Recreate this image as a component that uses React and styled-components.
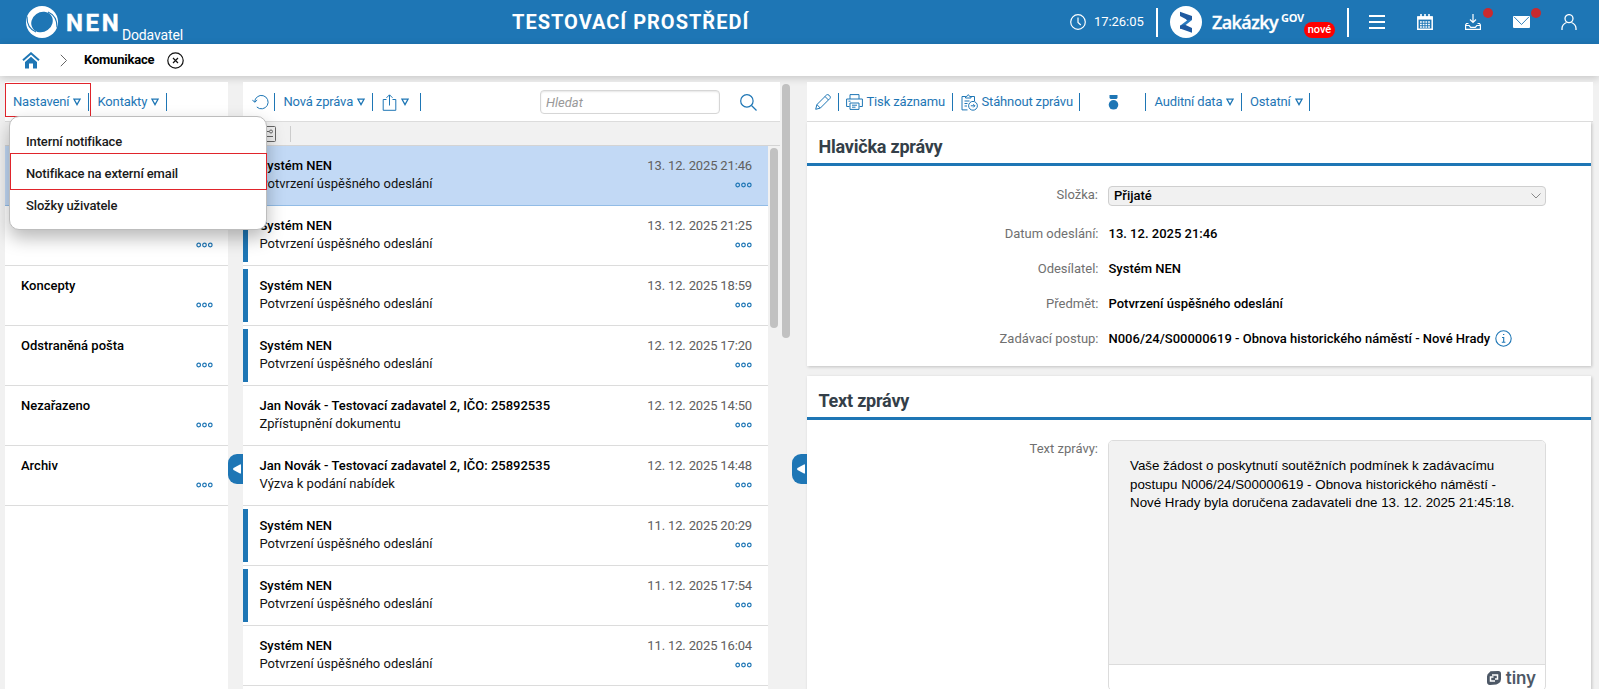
import React from "react";
import styled, { createGlobalStyle, css } from "styled-components";

const BLUE = "#1e76b5";
const LINE = "#dcdcdc";

const Global = createGlobalStyle`
  * { box-sizing: border-box; }
  html, body { margin: 0; height: 100%; overflow: hidden; }
  #root { height: 100%; }
  body {
    background: #f1f1f1;
    color: #111;
    font: 13px/18px Roboto, "Liberation Sans", sans-serif;
  }
`;

const Page = styled.div`
  height: 689px;
  overflow: hidden;
  display: flex;
  flex-direction: column;
`;

/* Header */
const Header = styled.header`
  flex: none;
  height: 44px;
  background: ${BLUE};
  color: #fff;
  display: flex;
  align-items: center;
  justify-content: space-between;
  padding: 0 22px 0 26px;
`;
const Brand = styled.div`
  display: flex;
  align-items: center;
  width: 486px;
  height: 44px;
`;
const BrandName = styled.div`
  width: 56px;
  margin-left: 8px;
  padding-top: 2px;
  font-size: 24px;
  line-height: 28px;
  font-weight: 700;
  letter-spacing: 2.6px;
  -webkit-text-stroke: 0.4px #fff;
  white-space: nowrap;
`;
const Role = styled.div`
  align-self: flex-end;
  font-size: 14px;
  line-height: 18px;
  letter-spacing: -0.15px;
`;
const Environment = styled.div`
  font-size: 20px;
  font-weight: 700;
  letter-spacing: 1px;
  white-space: nowrap;
  flex: 1;
`;
const HeaderTools = styled.div`
  display: flex;
  align-items: center;
  height: 44px;
`;
const Clock = styled.div`
  display: flex;
  align-items: center;
  gap: 8px;
  width: 86px;
  white-space: nowrap;
  letter-spacing: -0.05px;
`;
const HeaderRule = styled.div`
  width: 2px;
  height: 29px;
  background: #fff;
`;
const Portal = styled.div`
  display: flex;
  align-items: center;
  width: 189px;
  padding-left: 12px;
`;
const PortalName = styled.span`
  width: 69px;
  margin-left: 10px;
  font: 600 18px/24px "Open Sans", sans-serif;
  letter-spacing: -0.6px;
  -webkit-text-stroke: 0.3px #fff;
  white-space: nowrap;
`;
const PortalSup = styled.span`
  width: 23px;
  margin-top: -8px;
  font: 700 11px/12px "Open Sans", sans-serif;
  letter-spacing: -0.3px;
`;
const NewPill = styled.span`
  width: 31px;
  height: 16px;
  margin-top: 16px;
  border-radius: 8px;
  background: #f00;
  font-size: 11px;
  line-height: 16px;
  font-weight: 500;
  text-align: center;
`;
const IconRow = styled.div`
  display: flex;
  align-items: center;
  gap: 32px;
  padding-left: 20px;
`;
const IconSlot = styled.div`
  position: relative;
  width: 16px;
  height: 16px;
  svg { display: block; }
`;
const AlertDot = styled.span`
  position: absolute;
  left: 18px;
  top: -6px;
  width: 10px;
  height: 10px;
  border-radius: 50%;
  background: #c92a2f;
`;

/* Breadcrumb */
const Breadcrumb = styled.nav`
  flex: none;
  position: relative;
  height: 32px;
  background: #fff;
  box-shadow: 0 2px 8px rgba(0, 0, 0, 0.18);
  display: flex;
  align-items: center;
  padding-left: 22px;
`;
const CrumbSep = styled.div`
  width: 44px;
  padding-left: 20px;
  svg { display: block; }
`;
const Crumb = styled.div`
  width: 83px;
  font-weight: 700;
  letter-spacing: -0.2px;
  color: #000;
`;

/* Columns */
const Workspace = styled.main`
  flex: 1;
  min-height: 0;
  display: flex;
  padding: 6px 6px 0 5px;
`;
const Folders = styled.section`
  width: 223px;
  background: #fff;
  display: flex;
  flex-direction: column;
`;
const Messages = styled.section`
  width: 537px;
  display: flex;
  flex-direction: column;
`;
const Detail = styled.section`
  width: 786px;
  display: flex;
  flex-direction: column;
`;
const Toolbar = styled.div`
  flex: none;
  position: relative;
  height: 40px;
  background: #fff;
  border-bottom: 1px solid ${LINE};
  display: flex;
  align-items: center;
  padding-top: 1px;
`;
const ToolButton = styled.div`
  width: ${(p) => p.$w}px;
  height: 18px;
  padding-left: ${(p) => p.$pad ?? 8}px;
  border-right: 1px solid ${BLUE};
  color: ${BLUE};
  display: flex;
  align-items: center;
  gap: 4px;
  white-space: nowrap;
  letter-spacing: -0.15px;
  svg { flex: none; }
`;
const Highlight = styled.div`
  position: absolute;
  border: 1px solid #e0242b;
  left: ${(p) => p.$x}px;
  top: ${(p) => p.$y}px;
  width: ${(p) => p.$w}px;
  height: ${(p) => p.$h}px;
  pointer-events: none;
`;
const Menu = styled.div`
  position: absolute;
  z-index: 5;
  left: 4px;
  top: 34px;
  width: 258px;
  height: 114px;
  padding: 9px 0;
  background: #fff;
  border: 1px solid #bdbdbd;
  border-radius: 10px;
  box-shadow: 0 8px 18px rgba(0, 0, 0, 0.28);
`;
const MenuItem = styled.div`
  height: 32px;
  padding-left: 16px;
  line-height: 32px;
  font-weight: 500;
  letter-spacing: -0.13px;
  color: #1a1a1a;
`;
const FilterBar = styled.div`
  flex: none;
  height: 24px;
  background: #f1f1f1;
  border-bottom: 1px solid #d4d4d4;
  display: flex;
  align-items: center;
  gap: 14px;
  padding-left: 17px;
`;
const FilterRule = styled.div`
  width: 1px;
  height: 16px;
  background: #ccc;
`;
const rowBase = css`
  flex: none;
  height: 60px;
  border-bottom: 1px solid ${(p) => (p.$selected ? "#92bce6" : LINE)};
  background: ${(p) => (p.$selected ? "#c2d9f5" : "#fff")};
  display: flex;
  flex-direction: column;
`;
const FolderRow = styled.div`
  ${rowBase}
  padding: 11px 15px 0 16px;
`;
const MessageRow = styled.div`
  ${rowBase}
  padding: 11px 16px 0 16.5px;
  background-image: ${(p) => (p.$unread ? `linear-gradient(${BLUE}, ${BLUE})` : "none")};
  background-size: 5px 53px;
  background-position: 0 3px;
  background-repeat: no-repeat;
`;
const RowLine = styled.div`
  height: 18px;
  display: flex;
  justify-content: space-between;
  align-items: center;
  white-space: nowrap;
  svg { margin-top: 2px; }
`;
const Sender = styled.span`
  font-weight: 500;
  color: #000;
`;
const Subject = styled.span`
  color: #111;
`;
const Stamp = styled.span`
  color: #606060;
  letter-spacing: -0.15px;
`;
const List = styled.div`
  width: 525px;
  overflow: hidden;
`;
const ListArea = styled.div`
  flex: 1;
  min-height: 0;
  display: flex;
  gap: 2px;
`;
const Thumb = styled.div`
  flex: none;
  width: 8px;
  height: ${(p) => p.$h}px;
  margin-top: 2px;
  border-radius: 4px;
  background: #c1c1c1;
`;
const Splitter = styled.div`
  width: 15px;
  padding-top: 372px;
  z-index: 1;
`;
const Handle = styled.div`
  width: 15px;
  height: 30px;
  padding-left: 2px;
  border-radius: 9px 0 0 9px;
  background: ${BLUE};
  display: flex;
  align-items: center;
  justify-content: center;
`;
const OuterScroll = styled.div`
  width: 12px;
  padding-left: 2px;
`;
const SearchBox = styled.input`
  width: 180px;
  height: 24px;
  margin: 0 19.5px 0 119px;
  padding: 0 5px;
  border: 1px solid #d6d6d6;
  border-radius: 4px;
  box-shadow: inset 0 1px 2px rgba(0, 0, 0, 0.1);
  background: #fff;
  font: italic 13px Roboto, sans-serif;
  outline: 0;
  &::placeholder { color: #999; }
`;

/* Detail */
const Card = styled.div`
  flex: none;
  width: 784px;
  height: ${(p) => p.$h}px;
  margin-bottom: 10px;
  background: #fff;
  box-shadow: 1px 1px 3px rgba(0, 0, 0, 0.2);
`;
const CardTitle = styled.h2`
  height: 44px;
  margin: 0;
  padding: 6px 0 0 11.5px;
  border-bottom: 3px solid ${BLUE};
  font-size: 18px;
  line-height: 38px;
  font-weight: 700;
  letter-spacing: -0.22px;
  color: #343f49;
`;
const Field = styled.div`
  display: flex;
  height: ${(p) => p.$h ?? 35}px;
  line-height: 18px;
`;
const Label = styled.div`
  width: ${(p) => p.$w ?? 291.5}px;
  margin-right: 10px;
  text-align: right;
  color: #707070;
`;
const Value = styled.div`
  display: flex;
  align-items: flex-start;
  gap: 4.5px;
  font-weight: 500;
  color: #000;
  white-space: nowrap;
`;
const Select = styled.div`
  width: 438px;
  height: 20px;
  padding: 0 4px 0 5px;
  border: 1px solid #cfcfcf;
  border-radius: 4px;
  background: #f1f1f1;
  display: flex;
  align-items: center;
  justify-content: space-between;
  font-weight: 500;
  color: #000;
`;
const HeaderFields = styled.div`
  padding-top: 20px;
`;
const Editor = styled.div`
  width: 438px;
  height: 251px;
  border: 1px solid #dcdcdc;
  border-radius: 5px;
  overflow: hidden;
  background: #fff;
`;
const EditorBody = styled.div`
  height: 224px;
  padding: 16px 21px;
  background: #f2f2f2;
  border-bottom: 1px solid #dcdcdc;
  font: 13.333px/18.6px "Liberation Sans", Arial, sans-serif;
  color: #000;
  white-space: nowrap;
`;
const EditorFoot = styled.div`
  display: flex;
  align-items: center;
  justify-content: flex-end;
  gap: 4px;
  height: 25px;
  padding-right: 9px;
  color: #4d5866;
  font: 600 17px/20px Inter, sans-serif;
  letter-spacing: -0.1px;
`;

const Ico = ({ w = 16, h = 16, vb, children, sw = 1, fill = "none" }) => (
  <svg width={w} height={h} viewBox={vb || `0 0 ${w} ${h}`} fill={fill} stroke={fill === "none" ? "currentColor" : "none"} strokeWidth={sw}>
    {children}
  </svg>
);
const Caret = () => (
  <Ico w={8} h={8} sw={1.3}><path d="M1 1.2h6L4 6.6z" /></Ico>
);
const Dots = () => (
  <svg width="17" height="6" viewBox="0 0 17 6" fill="none" stroke={BLUE} strokeWidth="1.2">
    <circle cx="2.7" cy="3" r="1.8" /><circle cx="8.5" cy="3" r="1.8" /><circle cx="14.3" cy="3" r="1.8" />
  </svg>
);
const CollapseHandle = () => (
  <Handle><Ico w={10} h={12} fill="#fff"><path d="M8 1.500Q9 1 9 2.400v7.200Q9 11 8 10.500L1.500 7Q.5 6 1.500 5z" /></Ico></Handle>
);

const folders = ["", "", "Koncepty", "Odstraněná pošta", "Nezařazeno", "Archiv"];
const SYS = "Systém NEN";
const SENT = "Potvrzení úspěšného odeslání";
const JAN = "Jan Novák - Testovací zadavatel 2, IČO: 25892535";
const messages = [
  [SYS, SENT, "13. 12. 2025 21:46", false],
  [SYS, SENT, "13. 12. 2025 21:25", true],
  [SYS, SENT, "13. 12. 2025 18:59", true],
  [SYS, SENT, "12. 12. 2025 17:20", true],
  [JAN, "Zpřístupnění dokumentu", "12. 12. 2025 14:50", false],
  [JAN, "Výzva k podání nabídek", "12. 12. 2025 14:48", false],
  [SYS, SENT, "11. 12. 2025 20:29", true],
  [SYS, SENT, "11. 12. 2025 17:54", true],
  [SYS, SENT, "11. 12. 2025 16:04", false],
];

const TopBar = () => (
  <Header>
    <Brand>
      <svg width="32" height="32" viewBox="0 0 32 32" fill="none">
        <circle cx="16" cy="16" r="16" fill="#fff" />
        <ellipse cx="16" cy="16" rx="11.200" ry="9.800" transform="rotate(-35 16 16)" fill={BLUE} />
        <path d="M1 10.500C.8 18 4 23.500 10 26M31 21.500C31.200 14 28 8.500 22 6" stroke={BLUE} strokeWidth="1.100" />
      </svg>
      <BrandName>NEN</BrandName>
      <Role>Dodavatel</Role>
    </Brand>
    <Environment>TESTOVACÍ PROSTŘEDÍ</Environment>
    <HeaderTools>
      <Clock>
        <Ico sw={1.2}><circle cx="8" cy="8" r="7.3" /><path d="M8 3.500V8.500L10.800 11" /></Ico>
        17:26:05
      </Clock>
      <HeaderRule />
      <Portal>
        <svg width="32" height="32" viewBox="0 0 32 32">
          <circle cx="16" cy="16" r="16" fill="#fff" />
          <path d="M22 10v4L12.500 21.500L10 23V19.700L17 14.500L14 10Z" fill="#2a7bc0" />
          <path d="M10 5.700L22 10V13.500L17.500 14L10 10ZM10 19.700L14.500 18.500L22 22V26.700L10 22.500Z" fill="#1f5aa0" />
        </svg>
        <PortalName>Zakázky</PortalName>
        <PortalSup>GOV</PortalSup>
        <NewPill>nové</NewPill>
      </Portal>
      <HeaderRule />
      <IconRow>
        <IconSlot><Ico sw={2}><path d="M0 2h16M0 8h16M0 14h16" /></Ico></IconSlot>
        <IconSlot>
          <Ico sw={1.500}>
            <path d="M.8 3h14.400v12.200H.8z" /><path d="M.6 4h14.800" strokeWidth="3.200" />
            <path d="M4 0v4M8 0v4M12 0v4" strokeWidth="1.600" />
            <path d="M3 8h10M3 10.500h10M3 13h10" strokeWidth="1.600" strokeDasharray="1.800 .9" />
          </Ico>
        </IconSlot>
        <IconSlot>
          <Ico sw={1.2}><path d="M8 0v8M5 5.500l3 3 3-3M3.500 9.500H1.500L.6 11v4.300h14.800V11l-.9-1.500h-2M.6 11.500h3.600l1.500 1.800h4.600l1.500-1.800h3.600" /></Ico>
          <AlertDot />
        </IconSlot>
        <IconSlot>
          <svg width="17" height="16" viewBox="0 0 17 16"><rect y="2" width="17" height="12" rx="1" fill="#fff" /><path d="M1.200 3l7.300 7.500L15.800 3" fill="none" stroke={BLUE} strokeWidth=".9" /></svg>
          <AlertDot />
        </IconSlot>
        <IconSlot><Ico sw={1.300}><circle cx="8" cy="4.600" r="4" /><path d="M1 16v-1.500C1 11.500 3 9.500 5.500 8.500M15 16v-1.500C15 11.500 13 9.500 10.500 8.500" /></Ico></IconSlot>
      </IconRow>
    </HeaderTools>
  </Header>
);

export default function App() {
  return (
    <Page>
      <Global />
      <TopBar />
      <Breadcrumb>
        <svg width="18" height="17" viewBox="0 0 18 17">
          <path d="M1 8.300L9 1.300l8 7" fill="none" stroke={BLUE} strokeWidth="2" />
          <path d="M3 10l6-5.200L15 10v6.500h-4v-5H7v5H3z" fill={BLUE} />
        </svg>
        <CrumbSep><Ico w={8} h={13} sw={1}><path d="M.8.8l5.700 5.700L.8 12.200" stroke="#666" /></Ico></CrumbSep>
        <Crumb>Komunikace</Crumb>
        <Ico w={17} h={17} sw={1.200}><g stroke="#111"><circle cx="8.500" cy="8.500" r="7.700" /><path d="M6 6l5 5M11 6l-5 5" /></g></Ico>
      </Breadcrumb>
      <Workspace>
        <Folders>
          <Toolbar>
            <ToolButton $w={84}>Nastavení<Caret /></ToolButton>
            <ToolButton $w={78} $pad={8.5}>Kontakty<Caret /></ToolButton>
            <Menu>
              <MenuItem>Interní notifikace</MenuItem>
              <MenuItem>Notifikace na externí email</MenuItem>
              <MenuItem>Složky uživatele</MenuItem>
              <Highlight $x={0} $y={36} $w={257} $h={37} />
            </Menu>
            <Highlight $x={0} $y={1} $w={86} $h={34} />
          </Toolbar>
          <FilterBar />
          {folders.map((name, i) => (
            <FolderRow key={i} $selected={i === 0}>
              <RowLine><Sender>{name}</Sender></RowLine>
              <RowLine><span /><Dots /></RowLine>
            </FolderRow>
          ))}
        </Folders>
        <Splitter><CollapseHandle /></Splitter>
        <Messages>
          <Toolbar>
            <ToolButton $w={32} $pad={9}>
              <Ico w={17}><path d="M2.700 8A6.700 6.700 0 1 1 4.800 13M.3 5.800L2.700 8.300 5.200 6" /></Ico>
            </ToolButton>
            <ToolButton $w={98} $pad={8.5}>Nová zpráva<Caret /></ToolButton>
            <ToolButton $w={48} $pad={9}>
              <Ico w={15} h={17}><path d="M4.500 5.500H1.200v10.800h12.600V5.500h-3.300M7.500 11.500V1M4.500 3.800l3-3 3 3" /></Ico><Caret />
            </ToolButton>
            <SearchBox placeholder="Hledat" />
            <Ico w={17} h={17} sw={1.200}><g stroke={BLUE}><circle cx="6.900" cy="6.900" r="6.200" /><path d="M11.500 11.500l5 5" /></g></Ico>
          </Toolbar>
          <FilterBar>
            <Ico h={16}><g stroke="#666"><rect x=".5" y=".5" width="15" height="15" rx="1" /><path d="M3 5.500h6M6 10.500h7" /><circle cx="11" cy="5.500" r="1.500" /><circle cx="5" cy="10.500" r="1.500" /></g></Ico>
            <FilterRule />
          </FilterBar>
          <ListArea>
            <List>
              {messages.map(([from, subject, date, unread], i) => (
                <MessageRow key={i} $selected={i === 0} $unread={unread}>
                  <RowLine><Sender>{from}</Sender><Stamp>{date}</Stamp></RowLine>
                  <RowLine><Subject>{subject}</Subject><Dots /></RowLine>
                </MessageRow>
              ))}
              <MessageRow />
            </List>
            <Thumb $h={180} />
          </ListArea>
        </Messages>
        <OuterScroll><Thumb $h={254} /></OuterScroll>
        <Splitter><CollapseHandle /></Splitter>
        <Detail>
          <Toolbar>
            <ToolButton $w={32}>
              <Ico><path d="M.7 15.300l1.200-4.700L11.500 1q1.200-1 2.500.2l.8.800q1.200 1.200.1 2.500L5.300 14.100zM10 2.500l3.500 3.500M1.900 10.600l3.400 3.500" /></Ico>
            </ToolButton>
            <ToolButton $w={114} $pad={6.5}>
              <Ico w={17}><path d="M4 5V.6h9V5M3.500 12.500H.6V5h15.800v7.500h-2.900M4 9h9v6.400H4zM6 11.200h5M6 13.200h3.500M2.500 7.200h2" /></Ico>Tisk záznamu
            </ToolButton>
            <ToolButton $w={127} $pad={7.5}>
              <Ico w={17} h={17}><path d="M6.500 15.900H1V2.500h3.500M10 2.500h3.500V7M4.500 4V2.500h1.300Q7.200-.9 8.700 2.500H10V4zM3.500 7h5M3.500 9.500h3M3.500 12h2.500" /><circle cx="12" cy="11.800" r="4.400" /><path d="M9.800 11.800h4M12.300 10.200l1.600 1.600-1.600 1.600" /></Ico>Stáhnout zprávu
            </ToolButton>
            <ToolButton $w={66} $pad={28}>
              <Ico w={11} h={16} fill={BLUE}><path d="M1.500 1h8v3L8.500 5h-6L1.500 4z" /><circle cx="5.500" cy="10.800" r="4.800" /></Ico>
            </ToolButton>
            <ToolButton $w={96} $pad={8.5}>Auditní data<Caret /></ToolButton>
            <ToolButton $w={68}>Ostatní<Caret /></ToolButton>
          </Toolbar>
          <Card $h={244}>
            <CardTitle>Hlavička zprávy</CardTitle>
            <HeaderFields>
              <Field $h={39}>
                <Label $w={291}>Složka:</Label>
                <Select>Přijaté<Ico w={10} h={6}><path d="M.5.5l4.500 4.500L9.500.5" stroke="#888" /></Ico></Select>
              </Field>
              <Field><Label>Datum odeslání:</Label><Value>13. 12. 2025 21:46</Value></Field>
              <Field><Label>Odesílatel:</Label><Value>Systém NEN</Value></Field>
              <Field><Label>Předmět:</Label><Value>Potvrzení úspěšného odeslání</Value></Field>
              <Field>
                <Label>Zadávací postup:</Label>
                <Value>
                  N006/24/S00000619 - Obnova historického náměstí - Nové Hrady
                  <Ico w={17} h={17} sw={1.100}><g stroke={BLUE}><circle cx="8.500" cy="8.500" r="7.700" /><path d="M7 7.500h1.700v4.500M6.800 12.200h3.600M8 4.500h1.300" /></g></Ico>
                </Value>
              </Field>
            </HeaderFields>
          </Card>
          <Card $h={330}>
            <CardTitle>Text zprávy</CardTitle>
            <HeaderFields>
              <Field>
                <Label $w={291}>Text zprávy:</Label>
                <Editor>
                  <EditorBody>
                    Vaše žádost o poskytnutí soutěžních podmínek k zadávacímu<br />
                    postupu N006/24/S00000619 - Obnova historického náměstí -<br />
                    Nové Hrady byla doručena zadavateli dne 13. 12. 2025 21:45:18.
                  </EditorBody>
                  <EditorFoot>
                    <Ico><path d="M4.500 1.300L12 .9q3-.1 3 2.800v5.500q0 3-2.700 4.300l-2 1.100-6.300.3q-3 .1-3-2.800V6.500q0-2.700 2.400-4z" fill="currentColor" stroke="none" /><path d="M6 5h5.500v4H9M9 11H4.500V7H7.500" stroke="#fff" strokeWidth="1.500" /></Ico>
                    tiny
                  </EditorFoot>
                </Editor>
              </Field>
            </HeaderFields>
          </Card>
        </Detail>
      </Workspace>
    </Page>
  );
}
